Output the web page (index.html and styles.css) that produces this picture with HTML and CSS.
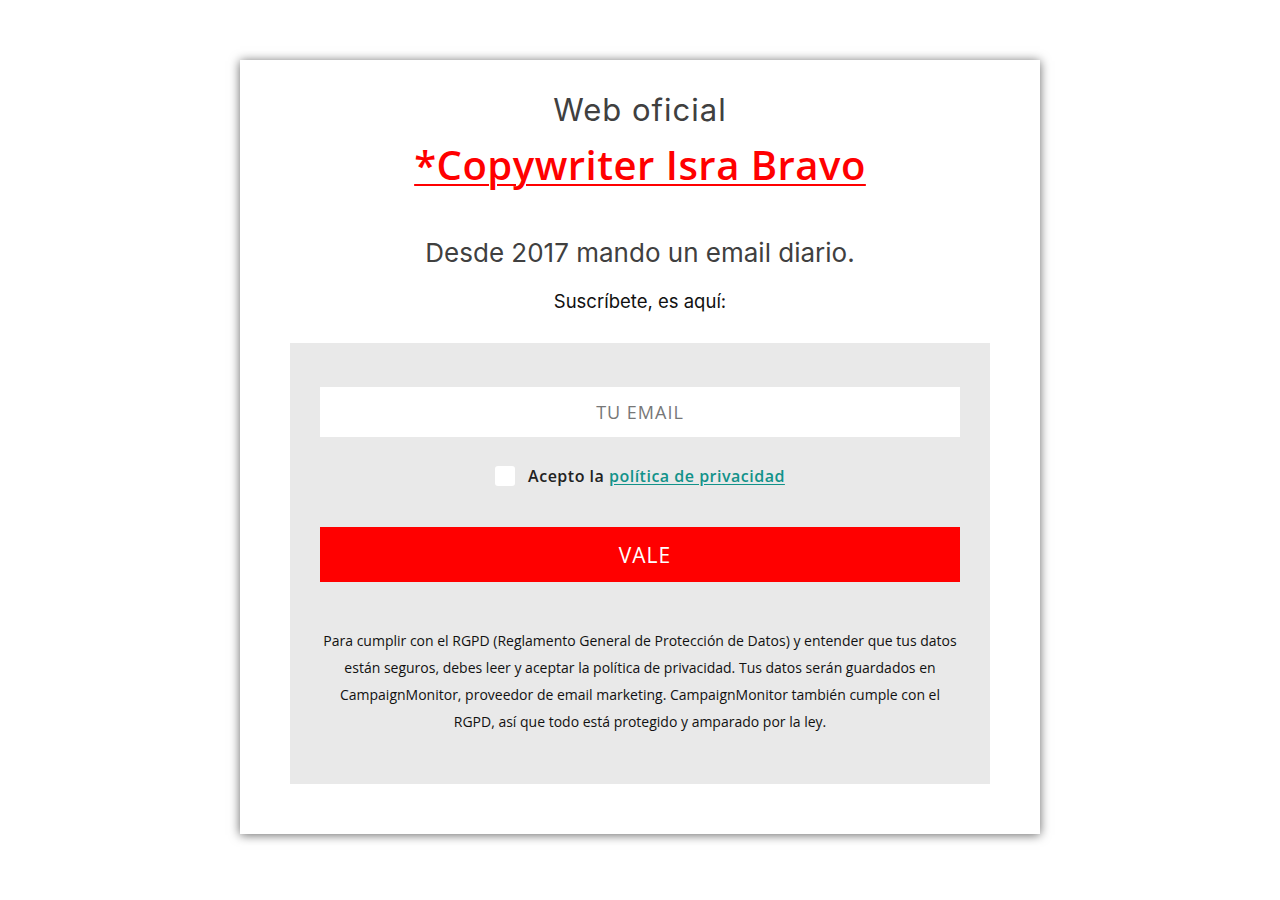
FILE: index.html
```html
<!DOCTYPE html>
<html lang="es">
<head>
<meta charset="utf-8">
<title>Copywriter Isra Bravo</title>
<link rel="stylesheet" href="styles.css">
</head>
<body>
<div class="card">
  <h2 class="kicker">Web oficial</h2>
  <h1 class="title"><a href="#">*Copywriter Isra Bravo</a></h1>
  <p class="lead">Desde 2017 mando un email diario.</p>
  <p class="sub">Suscríbete, es aquí:</p>
  <form class="box">
    <input class="email" type="text" placeholder="TU EMAIL">
    <label class="consent"><span class="check"></span><span class="consent-text">Acepto la <a href="#">política de privacidad</a></span></label>
    <button class="btn" type="button">VALE</button>
    <p class="legal">Para cumplir con el RGPD (Reglamento General de Protección de Datos) y entender que tus datos están seguros, debes leer y aceptar la política de privacidad. Tus datos serán guardados en CampaignMonitor, proveedor de email marketing. CampaignMonitor también cumple con el RGPD, así que todo está protegido y amparado por la ley.</p>
  </form>
</div>
</body>
</html>
```

FILE: styles.css
```css
html, body {
  margin: 0;
  padding: 0;
  background: #ffffff;
}
body {
  padding: 60px 0 40px;
  font-family: "Open Sans", "Liberation Sans", sans-serif;
}
.card {
  width: 800px;
  margin: 0 auto;
  box-sizing: border-box;
  padding: 30px 50px 50px;
  background: #fff;
  box-shadow: 0 1px 10px rgba(0,0,0,0.6);
  text-align: center;
}
.kicker {
  margin: 0;
  font-family: "Inter", sans-serif;
  font-weight: 400;
  font-size: 31px;
  letter-spacing: 1px;
  line-height: 40px;
  color: #404040;
}
.title {
  margin: 10px 0 0;
  font-family: "Open Sans", sans-serif;
  font-weight: 600;
  font-size: 40px;
  letter-spacing: 0.5px;
  line-height: 50px;
}
.title a {
  color: #ff0000;
  text-decoration: underline;
  text-decoration-thickness: 2px;
  text-underline-offset: 4px;
}
.lead {
  margin: 46px 0 0;
  font-family: "Inter", sans-serif;
  font-weight: 400;
  font-size: 26px;
  line-height: 34px;
  color: #404040;
}
.sub {
  margin: 19px 0 0;
  font-family: "Inter", sans-serif;
  font-size: 18.5px;
  line-height: 24px;
  color: #111;
}
.box {
  margin: 30px 0 0;
  background: #e9e9e9;
  padding: 44px 30px 49px;
  display: flex;
  flex-direction: column;
}
.email {
  box-sizing: border-box;
  height: 50px;
  padding: 0;
  border: none;
  background: #fff;
  text-align: center;
  font-family: "Open Sans", sans-serif;
  font-size: 18px;
  letter-spacing: 1px;
  font-weight: 500;
  color: #777;
  outline: none;
}
.email::placeholder {
  color: #777;
}
.consent {
  margin-top: 29px;
  display: flex;
  justify-content: center;
  align-items: center;
  gap: 13px;
  font-family: "Open Sans", sans-serif;
  font-weight: 600;
  font-size: 16px;
  letter-spacing: 0.5px;
  line-height: 20px;
  color: #222;
}
.check {
  width: 20px;
  height: 20px;
  background: #fff;
  border-radius: 3px;
}
.consent a {
  color: #12928a;
  text-decoration: underline;
  text-underline-offset: 2px;
}
.btn {
  margin-top: 41px;
  height: 55px;
  border: none;
  background: #ff0000;
  color: #fff;
  font-family: "Open Sans", sans-serif;
  font-size: 21px;
  letter-spacing: 1px;
  font-weight: 400;
  padding: 0 0 0 10px;
}
.legal {
  margin: 45px 0 0;
  font-family: "Open Sans", sans-serif;
  font-size: 14px;
  line-height: 27px;
  color: #111;
}
```
